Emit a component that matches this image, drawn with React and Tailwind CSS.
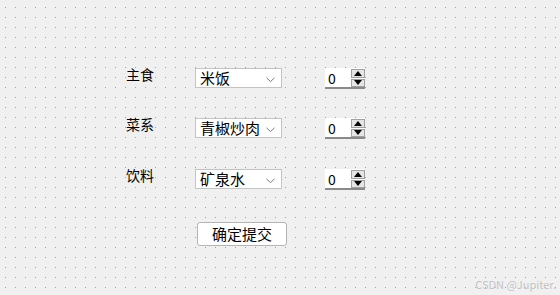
import React from "react";

const rows = [
  { label: "主食", value: "米饭", gap: "mt-[68px]" },
  { label: "菜系", value: "青椒炒肉", gap: "mt-[29px]" },
  { label: "饮料", value: "矿泉水", gap: "mt-[30px]" },
];

const Chevron = () => (
  <svg width="9" height="6" viewBox="0 0 9 6" className="absolute right-[6px] top-[8px]">
    <path d="M0.5 0.8 L4.5 4.6 L8.5 0.8" fill="none" stroke="#7a7a7a" strokeWidth="1" />
  </svg>
);

const SpinBox = () => (
  <div className="flex h-[21px] w-[40px] border-b-2 border-[#8a8a8a] bg-white">
    <span className="flex-1 pl-[3px] text-[14px] leading-[20px] text-black">0</span>
    <div className="flex w-[14px] flex-col gap-[1px] pt-[1px]">
      <div className="flex h-[9px] items-center justify-center border border-[#a0a0a0] bg-[#e5e5e5]">
        <svg width="8" height="5" viewBox="0 0 8 5">
          <path d="M4 0 L8 5 L0 5 Z" fill="#000" />
        </svg>
      </div>
      <div className="flex h-[9px] items-center justify-center border border-[#a0a0a0] bg-[#e5e5e5]">
        <svg width="8" height="5" viewBox="0 0 8 5">
          <path d="M0 0 L8 0 L4 5 Z" fill="#000" />
        </svg>
      </div>
    </div>
  </div>
);

export default function App() {
  return (
    <div
      className="relative h-[295px] w-[560px] overflow-hidden bg-[#f0f0f0] bg-[radial-gradient(circle_at_5.5px_7.5px,#a0a0a0_0.7px,transparent_1px)] bg-[length:10px_10px]"
      style={{ fontFamily: '"Noto Sans CJK SC", "Noto Sans", sans-serif' }}
    >
      <div className="flex flex-col pl-[126px]">
        {rows.map((r) => (
          <div key={r.label} className={`flex items-start ${r.gap}`}>
            <span className="-mt-[2px] w-[69px] text-[14px] leading-[16px] text-black">{r.label}</span>
            <div className="relative h-[20px] w-[87px] border border-[#c4c4c4] bg-white">
              <span className="block pl-[4px] text-[15px] leading-[18px] text-black">{r.value}</span>
              <Chevron />
            </div>
            <div className="ml-[43px]">
              <SpinBox />
            </div>
          </div>
        ))}
        <div className="mt-[31px] pl-[71px]">
          <button className="h-[24px] w-[90px] rounded-[3px] border border-[#b4b4b4] bg-white text-[15px] leading-[20px] text-black">
            确定提交
          </button>
        </div>
      </div>
      <span className="absolute bottom-[5px] right-[4px] text-[11px] leading-[12px] text-[#c0c0c0] [text-shadow:0_0_1px_#fff]">
        CSDN @Jupiter.
      </span>
    </div>
  );
}
